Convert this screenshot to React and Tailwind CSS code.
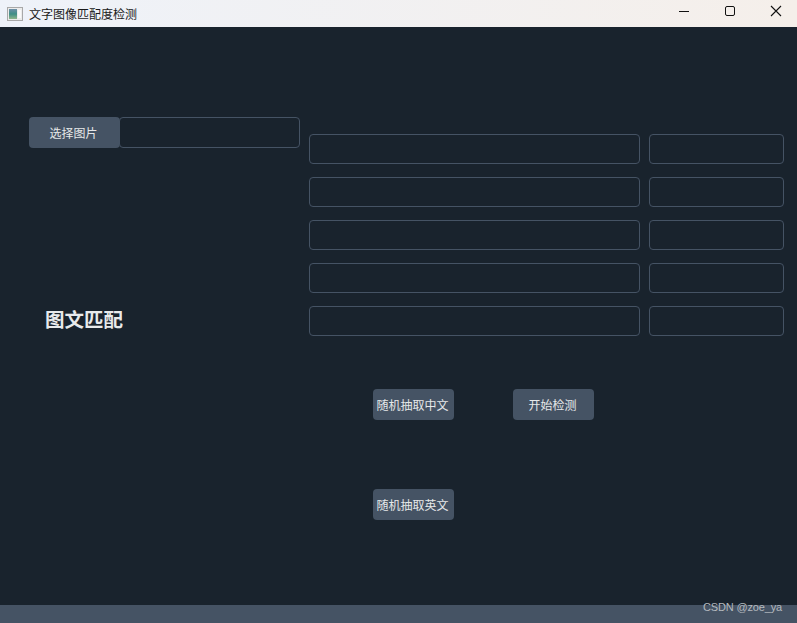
const cjk = { fontFamily: '"Noto Sans CJK SC", sans-serif' };

function Input({ className }) {
  return <div className={`h-[30px] rounded-[4px] border border-[#455364] bg-[#19232d] ${className}`} />;
}

function Btn({ children, className }) {
  return (
    <div className={`flex items-center justify-center rounded-[4px] bg-[#455364] pr-[2px] text-[12px] text-[#e6e8e9] ${className}`}>
      {children}
    </div>
  );
}

export default function App() {
  const rows = [0, 1, 2, 3, 4];
  return (
    <div className="flex h-[623px] w-[797px] flex-col overflow-hidden bg-[#19232d]" style={cjk}>
      <div className="flex h-[27px] items-center bg-gradient-to-r from-[#eef2f9] to-[#f5efea]">
        <svg width="16" height="14" viewBox="0 0 16 14" className="ml-[7px]">
          <defs>
            <linearGradient id="ic" x1="0" y1="0" x2="0" y2="1">
              <stop offset="0" stopColor="#6f8fa8" />
              <stop offset="0.5" stopColor="#3f8f86" />
              <stop offset="1" stopColor="#8fb58a" />
            </linearGradient>
          </defs>
          <rect x="0.5" y="0.5" width="15" height="13" fill="#ececec" stroke="#a8a8a8" />
          <rect x="2" y="2" width="8" height="10" fill="url(#ic)" />
          <rect x="11" y="3" width="3" height="8" fill="#fafafa" />
        </svg>
        <span className="ml-[6px] text-[12px] leading-none text-[#1a1a1a]">文字图像匹配度检测</span>
        <div className="ml-auto flex items-center pr-0">
          <svg width="46" height="27" viewBox="0 0 46 27">
            <path d="M20 11.5h10" stroke="#111" strokeWidth="1" />
          </svg>
          <svg width="46" height="27" viewBox="0 0 46 27">
            <rect x="20.5" y="6.5" width="9" height="9" rx="1.5" fill="none" stroke="#111" />
          </svg>
          <svg width="46" height="27" viewBox="0 0 46 27">
            <path d="M20 6l10 10M30 6l-10 10" stroke="#111" strokeWidth="1.1" />
          </svg>
        </div>
      </div>

      <div className="flex flex-1">
        <div className="w-[309px] pl-[29px] pt-[90px]">
          <div className="flex">
            <Btn className="h-[31px] w-[91px]">选择图片</Btn>
            <Input className="-ml-px h-[31px] w-[181px]" />
          </div>
          <div className="mt-[156px] pl-[16px] text-[19.5px] font-bold leading-[30px] text-[#e8eaeb]">图文匹配</div>
        </div>
        <div className="pt-[107px]">
          <div className="flex flex-col gap-[13px]">
            {rows.map((r) => (
              <div key={r} className="flex gap-[9px]">
                <Input className="w-[331px]" />
                <Input className="w-[135px]" />
              </div>
            ))}
          </div>
          <div className="mt-[53px] flex gap-[59px] pl-[64px]">
            <Btn className="h-[31px] w-[81px]">随机抽取中文</Btn>
            <Btn className="h-[31px] w-[81px]">开始检测</Btn>
          </div>
          <div className="mt-[69px] pl-[64px]">
            <Btn className="h-[31px] w-[81px]">随机抽取英文</Btn>
          </div>
        </div>
      </div>

      <div className="relative h-[18px] bg-[#455364]">
        <span
          className="absolute right-[15px] top-[-5px] text-[11px] leading-[14px] tracking-[-0.15px] text-[#b4b9be]"
          style={{ fontFamily: '"Liberation Sans", sans-serif' }}
        >
          CSDN @zoe_ya
        </span>
      </div>
    </div>
  );
}
